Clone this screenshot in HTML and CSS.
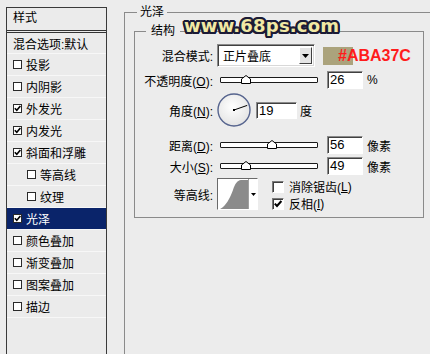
FILE: index.html
```html
<!DOCTYPE html>
<html lang="zh">
<head>
<meta charset="utf-8">
<title>图层样式 - 光泽</title>
<link rel="stylesheet" href="styles.css">
</head>
<body>
<div class="page">
  <aside class="styles-panel">
    <div class="panel-head">样式</div>
    <div class="panel-row blend-opt">混合选项:默认</div>
    <div class="panel-row"><span class="cb"></span>投影</div>
    <div class="panel-row"><span class="cb"></span>内阴影</div>
    <div class="panel-row"><span class="cb on"><svg viewBox="0 0 7 7" width="7" height="7"><path d="M0.8 3.2 L2.8 5.3 L6.4 0.9" fill="none" stroke="#000" stroke-width="1.6"/></svg></span>外发光</div>
    <div class="panel-row"><span class="cb on"><svg viewBox="0 0 7 7" width="7" height="7"><path d="M0.8 3.2 L2.8 5.3 L6.4 0.9" fill="none" stroke="#000" stroke-width="1.6"/></svg></span>内发光</div>
    <div class="panel-row"><span class="cb on"><svg viewBox="0 0 7 7" width="7" height="7"><path d="M0.8 3.2 L2.8 5.3 L6.4 0.9" fill="none" stroke="#000" stroke-width="1.6"/></svg></span>斜面和浮雕</div>
    <div class="panel-row sub"><span class="cb"></span>等高线</div>
    <div class="panel-row sub"><span class="cb"></span>纹理</div>
    <div class="panel-row active"><span class="cb on"><svg viewBox="0 0 7 7" width="7" height="7"><path d="M0.8 3.2 L2.8 5.3 L6.4 0.9" fill="none" stroke="#000" stroke-width="1.6"/></svg></span>光泽</div>
    <div class="panel-row"><span class="cb"></span>颜色叠加</div>
    <div class="panel-row"><span class="cb"></span>渐变叠加</div>
    <div class="panel-row"><span class="cb"></span>图案叠加</div>
    <div class="panel-row"><span class="cb"></span>描边</div>
  </aside>

  <fieldset class="group outer">
    <legend>光泽</legend>
    <fieldset class="group inner">
      <legend>结构</legend>
      <div class="form">
        <div class="row r-blend">
          <span class="lbl">混合模式:</span>
          <div class="select">
            <span class="select-text">正片叠底</span>
            <span class="select-btn"><svg width="7" height="4" viewBox="0 0 7 4"><path d="M0 0 H7 L3.5 4 Z" fill="#000"/></svg></span>
          </div>
          <span class="swatch"></span>
          <span class="hex">#ABA37C</span>
        </div>

        <div class="row r-slider r-opacity">
          <span class="lbl">不透明度(<u>O</u>):</span>
          <div class="slider"><span class="thumb" style="left:26%"><svg width="10" height="9" viewBox="0 0 10 9"><path d="M0.5 8.5 V4 L5 0.5 L9.5 4 V8.5 Z" fill="#fff" stroke="#000"/></svg></span></div>
          <span class="num">26</span>
          <span class="unit">%</span>
        </div>

        <div class="row r-angle">
          <span class="lbl">角度(<u>N</u>):</span>
          <svg class="dial" width="34" height="34" viewBox="0 0 34 34">
            <defs>
              <radialGradient id="dialFill" cx="0.45" cy="0.4" r="0.6">
                <stop offset="0" stop-color="#ffffff"/>
                <stop offset="1" stop-color="#e4e4e4"/>
              </radialGradient>
            </defs>
            <circle cx="17" cy="17" r="16" fill="url(#dialFill)" stroke="#56648e" stroke-width="1.4"/>
            <line x1="17" y1="17" x2="30.2" y2="12.4" stroke="#000" stroke-width="1"/>
            <rect x="16" y="16" width="2" height="2" fill="#000"/>
          </svg>
          <span class="num num-wide">19</span>
          <span class="unit unit-deg">度</span>
        </div>

        <div class="row r-slider r-distance">
          <span class="lbl">距离(<u>D</u>):</span>
          <div class="slider"><span class="thumb" style="left:53%"><svg width="10" height="9" viewBox="0 0 10 9"><path d="M0.5 8.5 V4 L5 0.5 L9.5 4 V8.5 Z" fill="#fff" stroke="#000"/></svg></span></div>
          <span class="num">56</span>
          <span class="unit">像素</span>
        </div>

        <div class="row r-slider r-size">
          <span class="lbl">大小(<u>S</u>):</span>
          <div class="slider"><span class="thumb" style="left:26%"><svg width="10" height="9" viewBox="0 0 10 9"><path d="M0.5 8.5 V4 L5 0.5 L9.5 4 V8.5 Z" fill="#fff" stroke="#000"/></svg></span></div>
          <span class="num">49</span>
          <span class="unit">像素</span>
        </div>

        <div class="row r-contour">
          <span class="lbl lbl-contour">等高线:</span>
          <div class="contour">
            <svg class="contour-preview" width="30" height="30" viewBox="0 0 30 30">
              <rect x="0" y="0" width="30" height="30" fill="#fff"/>
              <path d="M2 30 C 8 27, 12 19, 15 11 C 17 5, 19 1.5, 23 1 L 30 1 L 30 30 Z" fill="#8b8b8b"/>
            </svg>
            <span class="contour-btn"><svg width="5" height="3" viewBox="0 0 5 3"><path d="M0 0 H5 L2.5 3 Z" fill="#000"/></svg></span>
          </div>
          <div class="checks">
            <div class="check-row"><span class="rcb"></span>消除锯齿(<u>L</u>)</div>
            <div class="check-row"><span class="rcb"><svg width="10" height="10" viewBox="0 0 10 10"><path d="M1.8 4.6 L4 7 L8.4 2" fill="none" stroke="#000" stroke-width="2"/></svg></span>反相(<u>I</u>)</div>
          </div>
        </div>
      </div>
    </fieldset>
  </fieldset>

  <div class="watermark">www.68ps.com</div>
</div>
</body>
</html>
```

FILE: styles.css
```css
html, body {
  margin: 0;
  padding: 0;
}

body {
  width: 430px;
  height: 354px;
  overflow: hidden;
  background: #ececec;
  color: #000;
  font-family: "Liberation Sans", "Noto Sans CJK SC", sans-serif;
  font-size: 12px;
}

.page {
  position: relative;
  display: flex;
  align-items: flex-start;
  width: 430px;
  height: 354px;
  overflow: hidden;
}

/* ---------- left styles list (continues past the bottom edge) ---------- */
.styles-panel {
  flex: none;
  margin: 7px 0 0 6px;
  width: 99px;
  height: 346px;
  border: 1px solid #3a3a3a;
  border-bottom: 0;
  background: #ebebeb;
}

.panel-head {
  height: 22px;
  line-height: 20px;
  padding-left: 6px;
  border-bottom: 3px double #333;
}

.panel-row {
  display: flex;
  align-items: center;
  height: 21px;
  padding-left: 6px;
  border-bottom: 1px solid #f7f7f7;
  white-space: nowrap;
}

.panel-row.blend-opt {
  height: 20px;
}

.panel-row.sub {
  padding-left: 20px;
}

.panel-row.active {
  background: #0a246a;
  color: #fff;
}

.cb {
  flex: none;
  display: flex;
  align-items: center;
  justify-content: center;
  width: 7px;
  height: 7px;
  margin-right: 4px;
  border: 1px solid #2a2a2a;
  background: #fff;
}

/* ---------- group boxes ---------- */
.group {
  margin: 0;
  min-width: 0;
  border: 1px solid #8a8a8a;
}

.group > legend {
  font-size: 12px;
  line-height: 14px;
}

.outer {
  flex: none;
  box-sizing: border-box;
  margin: 5px 0 0 17px;
  width: 306px;
  height: 349px;
  padding: 5px 0 0 9px;
  border-right: 0;
  border-bottom: 0;
}

.outer > legend {
  margin-left: 3px;
  padding: 0 3px;
}

.inner {
  box-sizing: border-box;
  width: 290px;
  padding: 0 0 7px 0;
}

.inner > legend {
  margin-left: 11px;
  padding: 0 5px;
}

/* ---------- form rows ---------- */
.form {
  display: flex;
  flex-direction: column;
}

.row {
  display: flex;
  align-items: center;
  white-space: nowrap;
}

.lbl {
  flex: none;
  width: 78px;
  text-align: right;
}

.r-blend {
  margin-top: 6px;
  height: 23px;
}

.select {
  flex: none;
  box-sizing: border-box;
  display: flex;
  align-items: center;
  margin-left: 4px;
  width: 98px;
  height: 23px;
  border: 1px solid;
  border-color: #8a8a8a #fff #fff #8a8a8a;
  box-shadow: inset 1px 1px 0 #404040, inset -1px -1px 0 #d8d8d8;
  background: #fff;
}

.select-text {
  padding-left: 5px;
}

.select-btn {
  box-sizing: border-box;
  display: flex;
  align-items: center;
  justify-content: center;
  margin-left: auto;
  margin-right: 2px;
  width: 13px;
  height: 17px;
  border: 1px solid;
  border-color: #fff #404040 #404040 #fff;
  background: #e4e4e4;
}

.swatch {
  flex: none;
  margin-left: 8px;
  width: 30px;
  height: 18px;
  background: #aba37c;
}

.hex {
  margin-left: -15px;
  color: #ff1c1c;
  font-family: "Liberation Sans", sans-serif;
  font-weight: bold;
  font-size: 16px;
  line-height: 18px;
}

.r-slider {
  height: 18px;
}

.r-opacity {
  margin-top: 4px;
}

.r-distance {
  margin-top: 9px;
}

.r-size {
  margin-top: 3px;
}

.slider {
  position: relative;
  flex: none;
  box-sizing: border-box;
  margin-left: 7px;
  width: 98px;
  height: 6px;
  border: 1px solid #1a1a1a;
  border-radius: 1px;
  background: #fff;
}

.thumb {
  position: absolute;
  top: -3px;
  width: 10px;
  height: 9px;
  margin-left: -5px;
  display: block;
}

.thumb svg {
  display: block;
}

.num {
  flex: none;
  box-sizing: border-box;
  margin-left: 9px;
  width: 36px;
  height: 18px;
  padding-left: 2px;
  border: 1px solid;
  border-color: #8a8a8a #fff #fff #8a8a8a;
  box-shadow: inset 1px 1px 0 #404040;
  background: #fff;
  font-size: 13px;
  line-height: 16px;
}

.unit {
  margin-left: 4px;
}

.r-angle {
  margin-top: 4px;
  height: 34px;
}

.dial {
  flex: none;
  display: block;
  margin-left: 4px;
}

.num-wide {
  margin-left: 5px;
  width: 41px;
  height: 17px;
}

.unit-deg {
  margin-left: 3px;
}

.r-contour {
  margin-top: 3px;
  height: 32px;
  align-items: flex-start;
}

.lbl-contour {
  line-height: 32px;
  padding-top: 2px;
}

.contour {
  flex: none;
  box-sizing: border-box;
  display: flex;
  margin-left: 4px;
  width: 41px;
  height: 32px;
  border: 1px solid;
  border-color: #6a6a6a #fff #fff #6a6a6a;
  box-shadow: inset 1px 1px 0 #303030;
  background: #fff;
}

.contour-preview {
  display: block;
}

.contour-btn {
  flex: 1;
  display: flex;
  align-items: center;
  justify-content: center;
  border-left: 1px solid #a0a0a0;
  background: #fff;
}

.checks {
  display: flex;
  flex-direction: column;
  margin-left: 14px;
}

.check-row {
  display: flex;
  align-items: center;
  height: 17px;
}

.rcb {
  flex: none;
  box-sizing: border-box;
  display: flex;
  align-items: center;
  justify-content: center;
  width: 12px;
  height: 12px;
  margin-right: 5px;
  border: 1px solid;
  border-color: #7a7a7a #fff #fff #7a7a7a;
  box-shadow: inset 1px 1px 0 #404040;
  background: #fff;
}

/* ---------- watermark overlay ---------- */
.watermark {
  position: absolute;
  left: 184px;
  top: 15px;
  font-family: "DejaVu Sans", sans-serif;
  font-weight: bold;
  font-size: 18px;
  line-height: 22px;
  letter-spacing: 0.2px;
  color: #f1e8a4;
  text-shadow:
    2px 0 0 #1b1b36, -2px 0 0 #1b1b36, 0 2px 0 #1b1b36, 0 -2px 0 #1b1b36,
    1.5px 1.5px 0 #1b1b36, -1.5px 1.5px 0 #1b1b36, 1.5px -1.5px 0 #1b1b36, -1.5px -1.5px 0 #1b1b36,
    1px 2px 0 #1b1b36, -1px 2px 0 #1b1b36, 2px 1px 0 #1b1b36, -2px 1px 0 #1b1b36,
    1px -2px 0 #1b1b36, -1px -2px 0 #1b1b36, 2px -1px 0 #1b1b36, -2px -1px 0 #1b1b36;
}
```
